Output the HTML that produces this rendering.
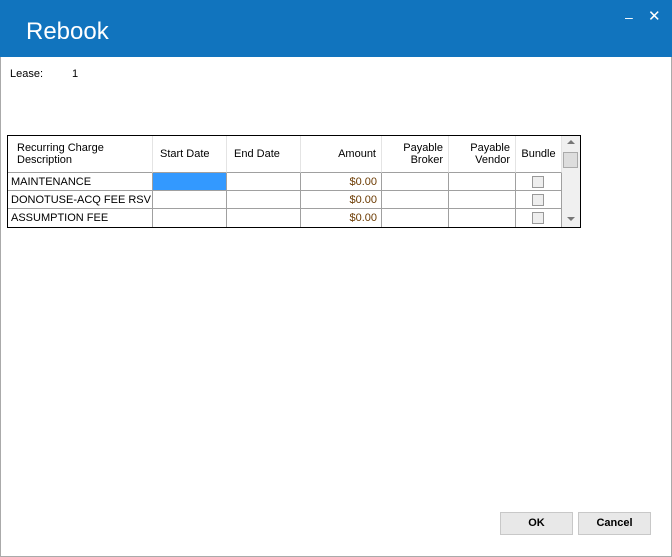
<!DOCTYPE html>
<html><head><style>
*{margin:0;padding:0;box-sizing:border-box}
body{width:672px;height:557px;background:#fff;font-family:"Liberation Sans",sans-serif;font-size:11px;color:#000;position:relative;overflow:hidden}
.win{position:absolute;left:0;top:0;width:672px;height:557px;border:1px solid #aaa;border-top:none}
.hdr{position:absolute;left:0;top:0;width:672px;height:57px;background:#1174be;color:#fff}
.hdr .t{position:absolute;left:26px;top:18px;font-size:24px;font-weight:300}
.hdr .m{position:absolute;left:625px;top:9px;font-size:14px}
.hdr .x{position:absolute;left:648px;top:7px;font-size:15px}
.lbl{position:absolute;top:68px;font-size:11px}
.grid{position:absolute;left:7px;top:135px;width:574px;height:93px;border:1px solid #000;background:#fff}
.c{position:absolute;border-right:1px solid #a0a0a0;border-bottom:1px solid #a0a0a0;font-size:11px;line-height:12px;white-space:nowrap}
.h{background:#fff;display:flex;align-items:center;top:0;height:37px;border-right:1px solid #e4e4e4;border-bottom:1px solid #a0a0a0}
.r{height:18px;padding:3px 3px 0 3px}
.amt{color:#6b3a00;text-align:right;padding-right:4px}
.cb{position:absolute;left:16px;top:3px;width:12px;height:12px;border:1px solid #999;background:#eee}
.sb{position:absolute;left:554px;top:0;width:18px;height:91px;background:#f0f0f0}
.btn{position:absolute;top:512px;width:73px;height:23px;background:#e8e8e8;border:1px solid #c8c8c8;font-weight:bold;font-size:11px;text-align:center;line-height:21px}
</style></head><body>
<div class="win"></div>
<div class="hdr"><div class="t">Rebook</div><div class="m">–</div><div class="x">✕</div></div>
<div class="lbl" style="left:10px">Lease:</div><div class="lbl" style="left:72px">1</div>
<div class="grid">
<div class="c h" style="left:0;width:145px;padding-left:9px">Recurring Charge<br>Description</div>
<div class="c h" style="left:145px;width:74px;padding-left:7px">Start Date</div>
<div class="c h" style="left:219px;width:74px;padding-left:7px">End Date</div>
<div class="c h" style="left:293px;width:81px;justify-content:flex-end;padding-right:5px">Amount</div>
<div class="c h" style="left:374px;width:67px;justify-content:flex-end;padding-right:5px;text-align:right">Payable<br>Broker</div>
<div class="c h" style="left:441px;width:67px;justify-content:flex-end;padding-right:5px;text-align:right">Payable<br>Vendor</div>
<div class="c h" style="left:508px;width:46px;justify-content:center">Bundle</div>

<div class="c r" style="left:0;top:37px;width:145px">MAINTENANCE</div>
<div class="c r" style="left:145px;top:37px;width:74px;background:#3399ff"></div>
<div class="c r" style="left:219px;top:37px;width:74px"></div>
<div class="c r amt" style="left:293px;top:37px;width:81px">$0.00</div>
<div class="c r" style="left:374px;top:37px;width:67px"></div>
<div class="c r" style="left:441px;top:37px;width:67px"></div>
<div class="c r" style="left:508px;top:37px;width:46px"><div class="cb"></div></div>

<div class="c r" style="left:0;top:55px;width:145px">DONOTUSE-ACQ FEE RSV</div>
<div class="c r" style="left:145px;top:55px;width:74px"></div>
<div class="c r" style="left:219px;top:55px;width:74px"></div>
<div class="c r amt" style="left:293px;top:55px;width:81px">$0.00</div>
<div class="c r" style="left:374px;top:55px;width:67px"></div>
<div class="c r" style="left:441px;top:55px;width:67px"></div>
<div class="c r" style="left:508px;top:55px;width:46px"><div class="cb"></div></div>

<div class="c r" style="left:0;top:73px;width:145px;border-bottom:none">ASSUMPTION FEE</div>
<div class="c r" style="left:145px;top:73px;width:74px;border-bottom:none"></div>
<div class="c r" style="left:219px;top:73px;width:74px;border-bottom:none"></div>
<div class="c r amt" style="left:293px;top:73px;width:81px;border-bottom:none">$0.00</div>
<div class="c r" style="left:374px;top:73px;width:67px;border-bottom:none"></div>
<div class="c r" style="left:441px;top:73px;width:67px;border-bottom:none"></div>
<div class="c r" style="left:508px;top:73px;width:46px;border-bottom:none"><div class="cb"></div></div>

<div class="sb">
<div style="position:absolute;left:5px;top:4px;width:0;height:0;border-left:4px solid transparent;border-right:4px solid transparent;border-bottom:4px solid #777"></div>
<div style="position:absolute;left:1px;top:16px;width:15px;height:16px;background:#ddd;border:1px solid #aaa"></div>
<div style="position:absolute;left:5px;top:81px;width:0;height:0;border-left:4px solid transparent;border-right:4px solid transparent;border-top:4px solid #777"></div>
</div>
</div>
<div class="btn" style="left:500px">OK</div>
<div class="btn" style="left:578px">Cancel</div>
</body></html>
